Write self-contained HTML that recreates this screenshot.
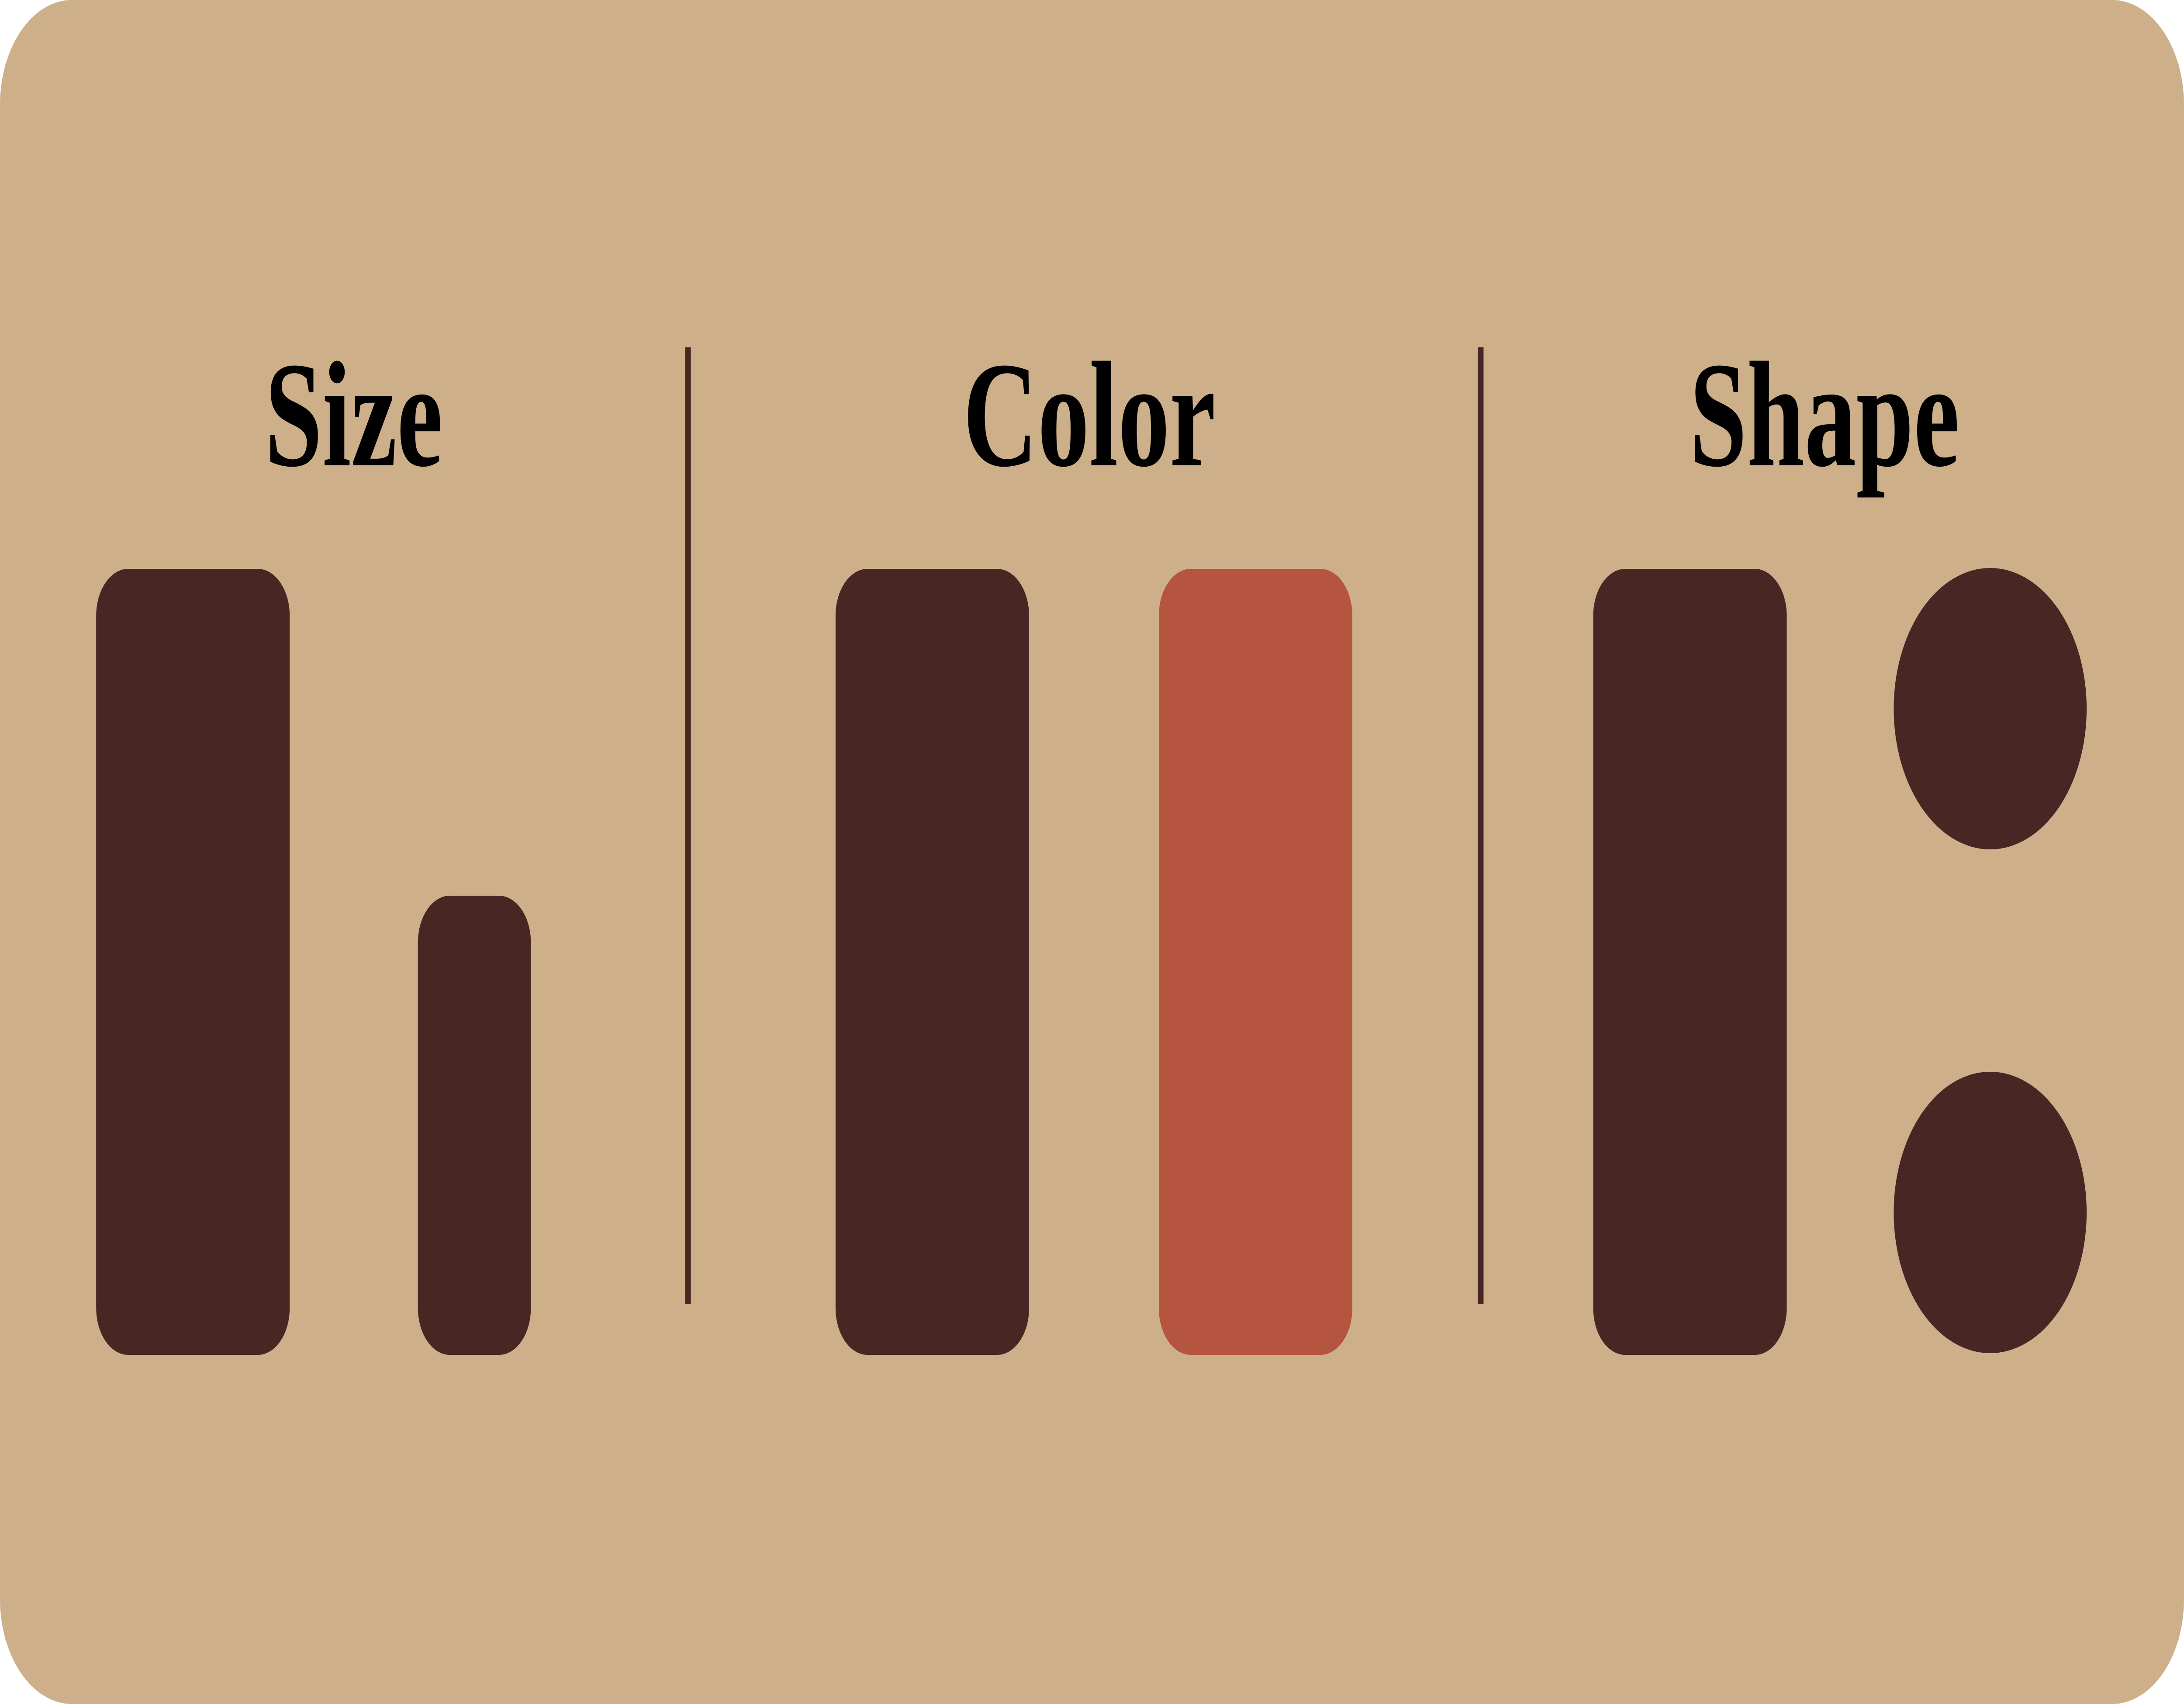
<!DOCTYPE html>
<html><head><meta charset="utf-8"><style>
html,body{margin:0;padding:0;background:#fff;width:100%;height:100%;overflow:hidden;}
svg{display:block;width:100vw;height:100vh;}
</style></head><body>
<svg viewBox="0 0 7290 3900" preserveAspectRatio="none" xmlns="http://www.w3.org/2000/svg">
<rect x="0" y="0" width="7290" height="3900" rx="240" ry="240" fill="#CDAF89"/>
<g font-family="Liberation Serif, serif" font-weight="bold" font-size="345" fill="#000" text-anchor="middle">
<text x="1181" y="1065">Size</text>
<text x="3636" y="1065">Color</text>
<text x="6090" y="1065">Shape</text>
</g>
<g fill="#472624">
<rect x="321" y="1302" width="646" height="1799" rx="107"/>
<rect x="1395" y="2050" width="377" height="1051" rx="107"/>
<rect x="2287" y="795" width="19" height="2190"/>
<rect x="2789" y="1302" width="646" height="1799" rx="107"/>
<rect x="4933" y="795" width="19" height="2190"/>
<rect x="5318" y="1302" width="646" height="1799" rx="107"/>
<circle cx="6643" cy="1622" r="322"/>
<circle cx="6643" cy="2775" r="322"/>
</g>
<rect x="3868" y="1302" width="646" height="1799" rx="107" fill="#B5553F"/>
</svg>
</body></html>
